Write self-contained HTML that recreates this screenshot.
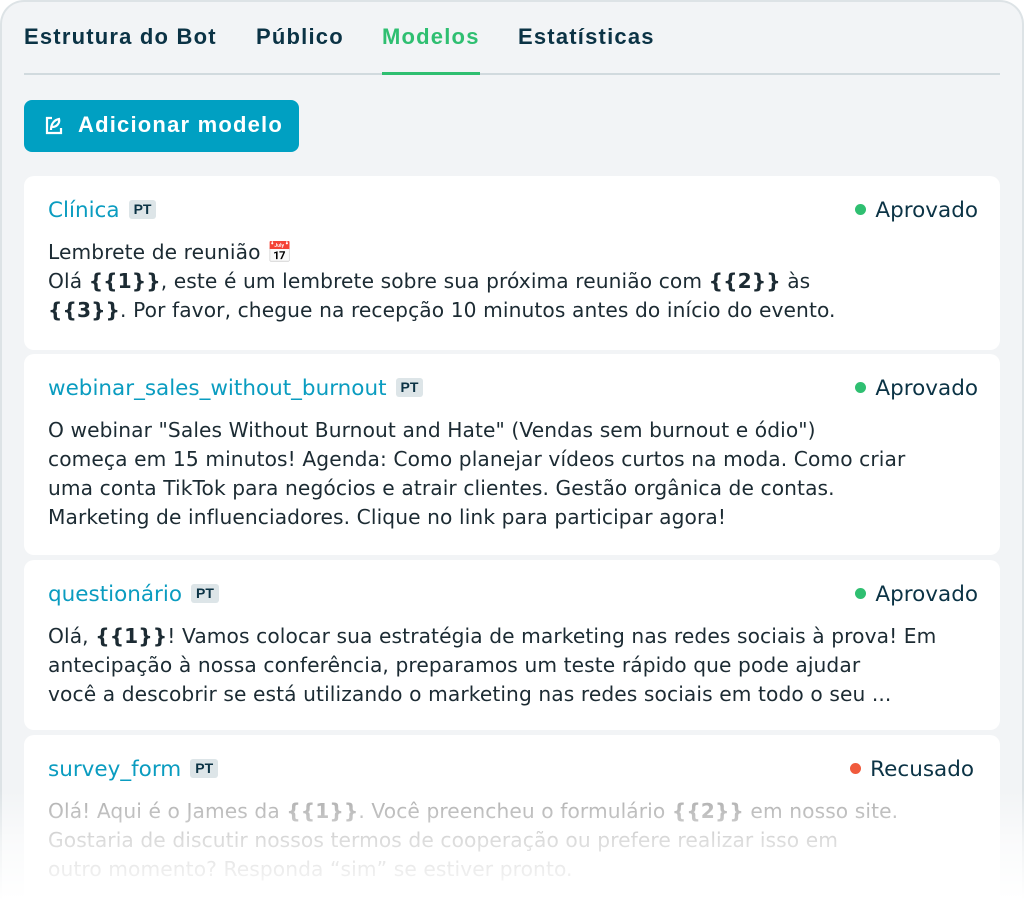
<!DOCTYPE html>
<html><head><meta charset="utf-8"><style>
*{margin:0;padding:0;box-sizing:border-box}
html,body{width:1024px;height:916px;overflow:hidden}
body{background:#fff;font-family:"DejaVu Sans","Liberation Sans",sans-serif;position:relative}
.frame{position:absolute;left:0;top:0;width:1024px;height:916px;background:#f2f4f6;border:2px solid #dde3e6;border-bottom:none;border-radius:24px 24px 0 0}
.tabs{position:absolute;left:24px;top:24px;width:976px;height:51px;border-bottom:2px solid #d1dade;font-family:"Liberation Sans",sans-serif}
.tab{position:absolute;top:0;font-weight:bold;font-size:22px;color:#0b3345;letter-spacing:1.2px}
.tab.active{color:#2fbf71}
.tab.active:after{content:"";position:absolute;left:0;right:0;top:48px;height:3px;background:#2fbf71}
.btn{position:absolute;left:24px;top:100px;width:275px;height:52px;background:#00a0c2;border-radius:8px;color:#fff;font-weight:bold;font-size:22px;padding:12px 0 0 54px;font-family:"Liberation Sans",sans-serif;letter-spacing:1.2px}
.btn svg{position:absolute;left:20px;top:16px}
.card{position:absolute;left:24px;width:976px;background:#fff;border-radius:10px;padding:20px 24px}
.title{font-size:21.5px;color:#0a9cc0;height:30px;line-height:30px}
.pt{display:inline-block;background:#dde5e8;color:#0b3345;font-weight:bold;font-size:14px;padding:1px 5px;border-radius:3px;vertical-align:3px;margin-left:9px;line-height:17px;font-family:"Liberation Sans",sans-serif}
.st{position:absolute;right:22px;top:20px;font-size:21.5px;color:#0b3345;line-height:30px}
.st i{display:inline-block;width:11px;height:11px;border-radius:50%;background:#2fbf71;margin-right:9px;vertical-align:2px}
.body{margin-top:12px;font-size:20.2px;line-height:29px;color:#1c2b33;white-space:nowrap;letter-spacing:0.1px}
.fade{position:absolute;left:-5px;top:790px;width:1040px;height:130px;background:linear-gradient(rgba(255,255,255,0),rgba(255,255,255,0.6) 40%,#fff 85%)}
</style></head><body>
<div class="frame"></div>
<div class="tabs">
<span class="tab" style="left:0">Estrutura do Bot</span>
<span class="tab" style="left:232px">Público</span>
<span class="tab active" style="left:358px">Modelos</span>
<span class="tab" style="left:494px">Estatísticas</span>
</div>
<div class="btn"><svg width="20" height="20" viewBox="0 0 20 20" fill="none" stroke="#fff" stroke-width="2.2"><path d="M8 2H3v15h14v-5"/><path d="M7 14c0-6 3-10 8-11 1 4-2 8-7 8"/></svg>Adicionar modelo</div>

<div class="card" style="top:176px;height:174px"><div class="title">Clínica<span class="pt">PT</span></div><div class="st"><i></i>Aprovado</div>
<div class="body">Lembrete de reunião 📅<br>Olá <b>{{1}}</b>, este é um lembrete sobre sua próxima reunião com <b>{{2}}</b> às<br><b>{{3}}</b>. Por favor, chegue na recepção 10 minutos antes do início do evento.</div></div>

<div class="card" style="top:354px;height:201px"><div class="title">webinar_sales_without_burnout<span class="pt">PT</span></div><div class="st"><i></i>Aprovado</div>
<div class="body">O webinar "Sales Without Burnout and Hate" (Vendas sem burnout e ódio")<br>começa em 15 minutos! Agenda: Como planejar vídeos curtos na moda. Como criar<br>uma conta TikTok para negócios e atrair clientes. Gestão orgânica de contas.<br>Marketing de influenciadores. Clique no link para participar agora!</div></div>

<div class="card" style="top:560px;height:170px"><div class="title">questionário<span class="pt">PT</span></div><div class="st"><i></i>Aprovado</div>
<div class="body">Olá, <b>{{1}}</b>! Vamos colocar sua estratégia de marketing nas redes sociais à prova! Em<br>antecipação à nossa conferência, preparamos um teste rápido que pode ajudar<br>você a descobrir se está utilizando o marketing nas redes sociais em todo o seu ...</div></div>

<div class="card" style="top:735px;height:170px"><div class="title">survey_form<span class="pt">PT</span></div><div class="st" style="right:26px"><i style="background:#f05a3c"></i>Recusado</div>
<div class="body" style="color:#a9a9a9">Olá! Aqui é o James da <b>{{1}}</b>. Você preencheu o formulário <b>{{2}}</b> em nosso site.<br>Gostaria de discutir nossos termos de cooperação ou prefere realizar isso em<br>outro momento? Responda “sim” se estiver pronto.</div></div>
<div class="fade"></div>
</body></html>
